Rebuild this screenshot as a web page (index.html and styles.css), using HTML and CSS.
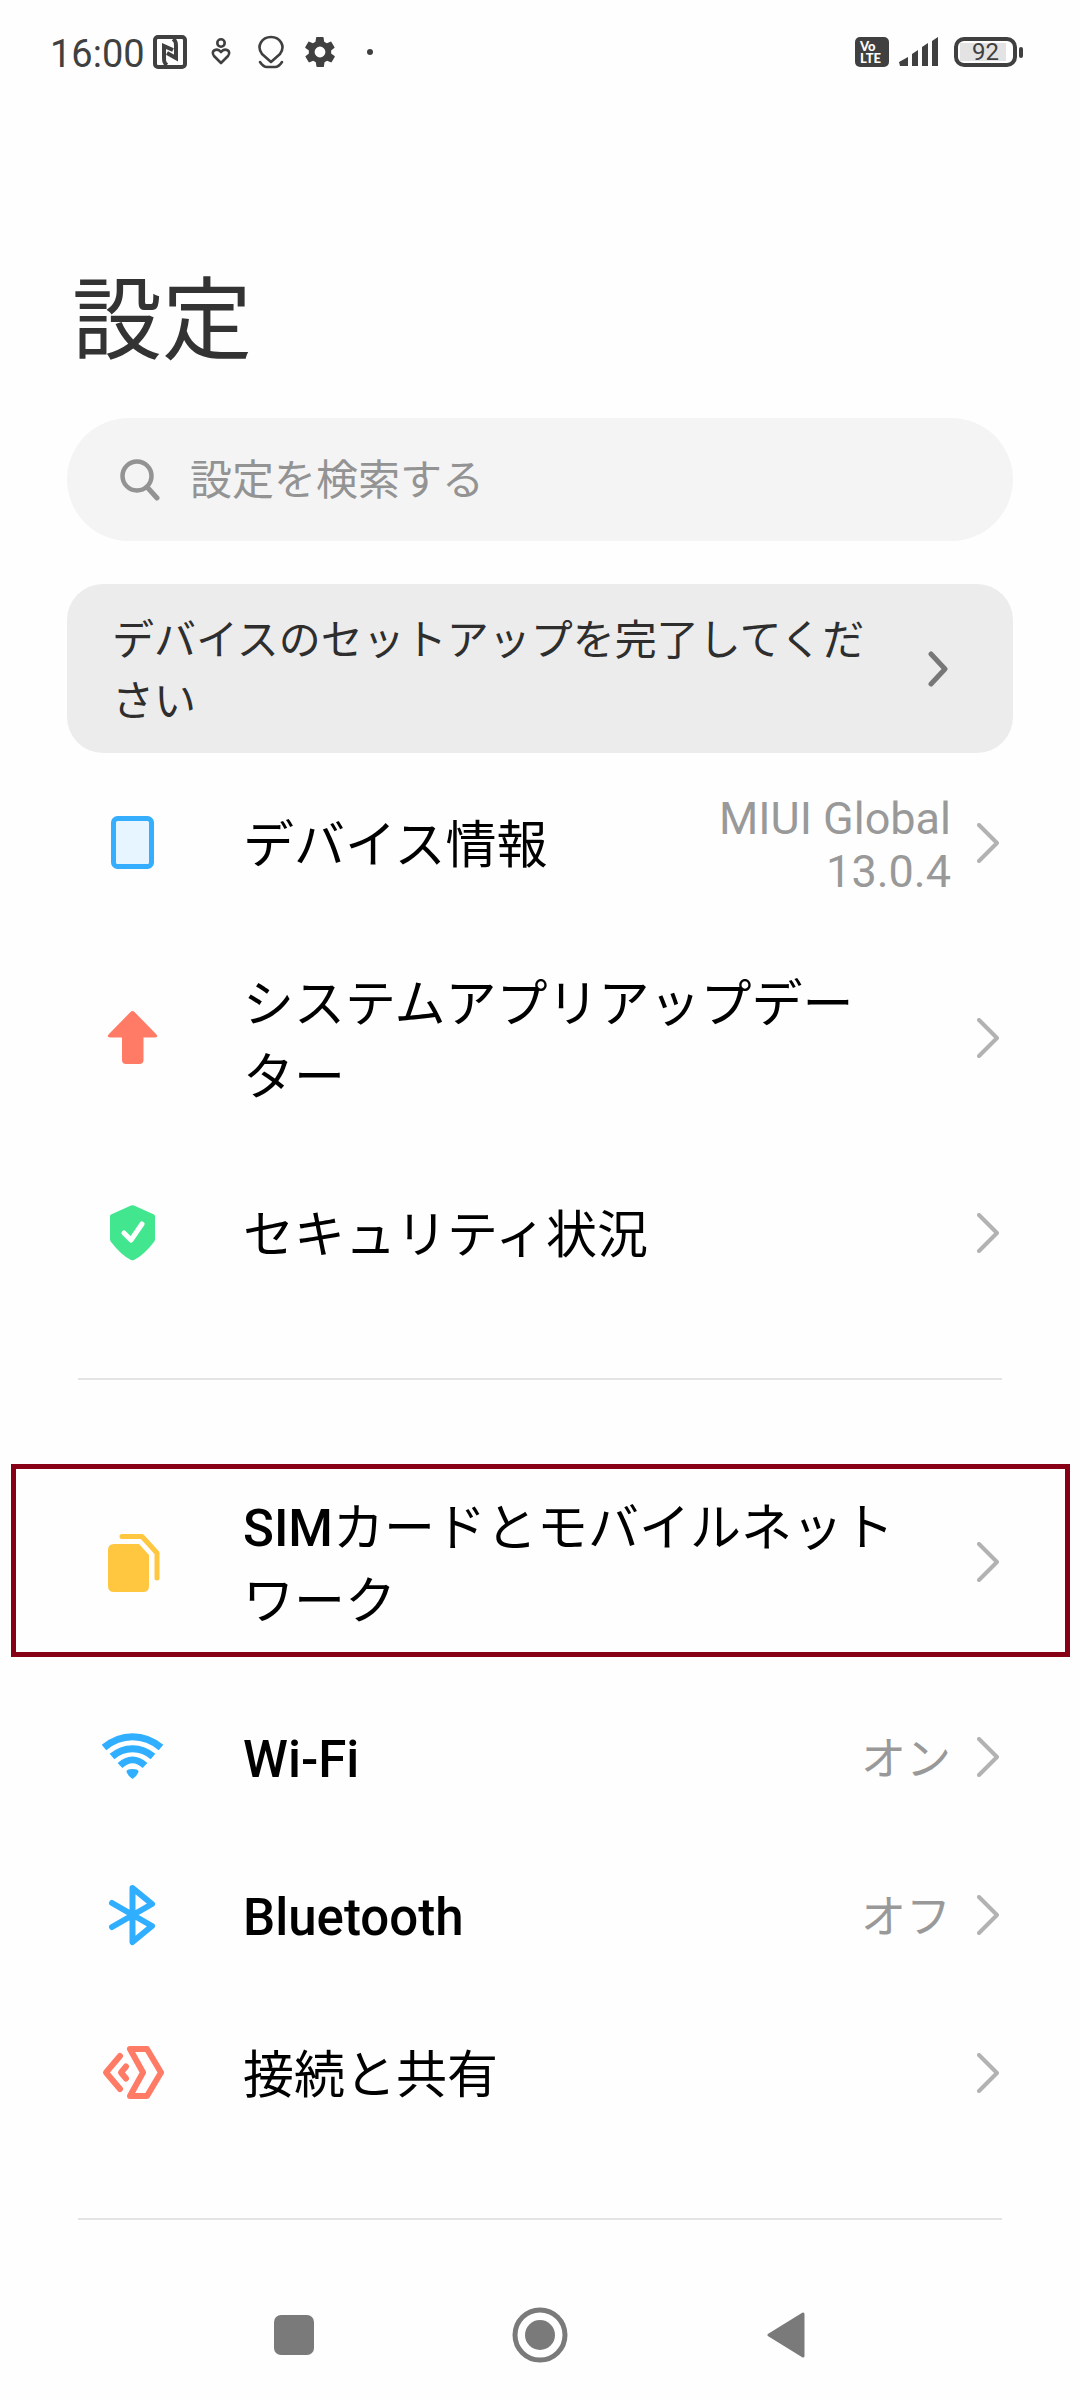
FILE: index.html
```html
<!DOCTYPE html>
<html lang="ja">

<head>
    <meta charset="UTF-8">
    <meta name="viewport" content="width=device-width, initial-scale=1.0">
    <title>設定</title>
    <link rel="stylesheet" href="styles.css">
</head>

<body>
    <!-- shared chevron -->
    <svg class="defs" width="0" height="0" aria-hidden="true">
        <symbol id="chevron" viewBox="0 0 22 40">
            <path d="M2 2 L20 20 L2 38" fill="none" stroke="currentColor" stroke-width="4" stroke-linecap="round" stroke-linejoin="round" />
        </symbol>
    </svg>

    <div id="status">
        <span class="time">16:00</span>
        <svg class="nfc" width="34" height="34" viewBox="0 0 34 34">
            <rect x="2" y="2" width="30" height="30" rx="3" fill="none" stroke="#404040" stroke-width="4" />
            <path d="M14 30 C11 28 11 26 11 22 V11 L20 15 M20 4 C23 6 23 8 23 12 V23 L14 18" fill="none" stroke="#404040" stroke-width="4" />
        </svg>
        <svg class="care" width="20" height="28" viewBox="0 0 20 28">
            <g fill="none" stroke="#404040" stroke-width="2.600" stroke-linejoin="round">
                <circle cx="10" cy="5" r="3.700" />
                <path d="M10 25 L3 18 C-1 13 6 9 10 14 C14 9 21 13 17 18 Z" />
            </g>
        </svg>
        <svg class="pin" width="26" height="34" viewBox="0 0 26 34">
            <g fill="none" stroke="#404040" stroke-width="2.600" stroke-linejoin="round" stroke-linecap="round">
                <path d="M13 27 L4 19 C-2 11 4 2 13 2 C22 2 28 11 22 19 Z" />
                <path d="M2 27 C4 30 6 32 9 32 H17 C20 32 22 30 24 27" />
            </g>
        </svg>
        <svg class="gear" width="30" height="30" viewBox="2 2 20 20">
            <path fill="#404040" d="M19.4 13a7.500 7.500 0 0 0 0-2l2.100-1.600c.2-.2.300-.4.100-.7l-2-3.400c-.1-.2-.4-.3-.6-.2l-2.500 1a7.300 7.300 0 0 0-1.700-1l-.4-2.600a.5.5 0 0 0-.5-.5h-4a.5.5 0 0 0-.5.4l-.4 2.700a7.700 7.700 0 0 0-1.700 1l-2.500-1c-.2-.1-.5 0-.6.2l-2 3.400c-.1.200-.1.500.1.700L4.600 11a7.500 7.500 0 0 0 0 2l-2.100 1.600c-.2.200-.3.400-.1.700l2 3.400c.1.200.4.300.6.200l2.500-1c.5.400 1.100.7 1.700 1l.4 2.600c0 .3.200.5.500.5h4c.3 0 .5-.2.500-.4l.4-2.700c.6-.2 1.200-.6 1.700-1l2.500 1c.2.100.5 0 .6-.2l2-3.400c.1-.2.100-.5-.1-.7zM12 15.600a3.600 3.600 0 1 1 0-7.200 3.600 3.600 0 0 1 0 7.200z" />
        </svg>
        <span class="dot"></span>
        <span class="volte"><span>Vo</span><span>LTE</span></span>
        <svg class="signal" width="40" height="30" viewBox="0 0 40 30">
            <path d="M0 25 L9 20 V29 H1 Z M13 17 L19 13 V29 H13 Z M23 10 L29 6 V29 H23 Z M33 4 L39 0 V29 H33 Z" fill="#404040" />
        </svg>
        <span class="battery"><span class="level">92</span></span>
        <span class="battery-tip"></span>
    </div>

    <h1>設定</h1>

    <form id="search" role="search">
        <svg width="40" height="42" viewBox="0 0 40 42">
            <g fill="none" stroke="#939393" stroke-width="4.500" stroke-linecap="round">
                <circle cx="17" cy="17" r="14.500" />
                <path d="M27 28 L37 39" stroke-width="5" />
            </g>
        </svg>
        <input type="search" name="q" placeholder="設定を検索する" aria-label="設定を検索する">
    </form>

    <a id="setup" href="#">
        <span>デバイスのセットアップを完了してください</span>
        <svg width="20" height="36" viewBox="0 0 20 36">
            <path d="M3 3 L17 18 L3 33" fill="none" stroke="#777" stroke-width="5" stroke-linecap="round" stroke-linejoin="round" />
        </svg>
    </a>

    <ul class="group">
        <li>
            <a class="row" href="#">
                <svg class="icon" viewBox="0 0 64 64">
                    <rect x="13.500" y="7.500" width="38" height="48" rx="4" fill="#e6f5ff" stroke="#36aeff" stroke-width="5" />
                </svg>
                <span class="label">デバイス情報</span>
                <span class="value">MIUI Global 13.0.4</span>
                <svg class="chevron"><use href="#chevron" /></svg>
            </a>
        </li>
        <li>
            <a class="row tall" href="#">
                <svg class="icon" viewBox="0 0 64 64">
                    <path d="M30.500 6 Q32.500 4 34.500 6 L56 28 Q59 31.500 55 31.500 H43.500 V54 Q43.500 58 39.500 58 H26 Q22 58 22 54 V31.500 H10 Q6 31.500 9 28 Z" fill="#ff7b66" />
                </svg>
                <span class="label">システムアプリアップデーター</span>
                <svg class="chevron"><use href="#chevron" /></svg>
            </a>
        </li>
        <li>
            <a class="row" href="#">
                <svg class="icon" viewBox="0 0 64 64">
                    <path d="M31 4.500 Q32.500 4 34 4.500 L54 13.500 Q55 14 55 15 V38 Q55 40 53.500 41.500 Q44 54 34 59 Q32.500 59.500 31 59 Q21 54 11.500 41.500 Q10 40 10 38 V15 Q10 14 11 13.500 Z" fill="#42e68f" />
                    <path d="M24 32 L31 39 L42 23" fill="none" stroke="#fff" stroke-width="5" stroke-linecap="round" stroke-linejoin="round" />
                </svg>
                <span class="label">セキュリティ状況</span>
                <svg class="chevron"><use href="#chevron" /></svg>
            </a>
        </li>
    </ul>
    <hr>
    <ul class="group">
        <li>
            <a class="row tall marked" href="#">
                <svg class="icon" viewBox="0 0 64 64">
                    <path d="M14 14 H39 L49 25 V56 Q49 62 43 62 H14 Q8 62 8 56 V20 Q8 14 14 14 Z" fill="#ffc640" />
                    <path d="M22 6.500 H42 L57 23 V48" fill="none" stroke="#ffc640" stroke-width="5" stroke-linecap="round" stroke-linejoin="round" />
                </svg>
                <span class="label"><b>SIM</b>カードとモバイルネットワーク</span>
                <svg class="chevron"><use href="#chevron" /></svg>
            </a>
        </li>
        <li>
            <a class="row" href="#">
                <svg class="icon" viewBox="0 0 64 64">
                    <g fill="none" stroke="#30aeff" stroke-width="7" stroke-linejoin="round">
                        <path d="M4 22.500 C21 8 44 8 61 22.500" />
                        <path d="M12 31.500 C24 21 41 21 53 31.500" />
                        <path d="M20 40.500 C28 33 37 33 45 40.500" />
                    </g>
                    <path d="M26.500 47 Q26 44 32.500 44 Q39 44 38.500 47 Q37 51 32.500 54 Q28 51 26.500 47 Z" fill="#30aeff" />
                </svg>
                <span class="label"><b>Wi-Fi</b></span>
                <span class="value">オン</span>
                <svg class="chevron"><use href="#chevron" /></svg>
            </a>
        </li>
        <li>
            <a class="row" href="#">
                <svg class="icon" viewBox="0 0 64 64">
                    <path d="M12 20 L52 43 L32.500 59 V5 L52 21 L12 44" fill="none" stroke="#30aeff" stroke-width="6" stroke-linecap="round" stroke-linejoin="round" />
                </svg>
                <span class="label"><b>Bluetooth</b></span>
                <span class="value">オフ</span>
                <svg class="chevron"><use href="#chevron" /></svg>
            </a>
        </li>
        <li>
            <a class="row" href="#">
                <svg class="icon" viewBox="0 0 64 64">
                    <g fill="none" stroke="#ff7b66" stroke-width="6" stroke-linecap="round" stroke-linejoin="round">
                        <path d="M30 8 H47 L61 31.500 L47 55 H30 L43 31.500 Z" />
                        <path d="M20 15 L6 31.500 L20 48" />
                        <path d="M26 25.500 L21 31.500 L26 37.500" />
                    </g>
                </svg>
                <span class="label">接続と共有</span>
                <svg class="chevron"><use href="#chevron" /></svg>
            </a>
        </li>
    </ul>
    <hr>

    <nav id="navbar">
        <button type="button" aria-label="履歴">
            <svg width="40" height="40" viewBox="0 0 40 40"><rect width="40" height="40" rx="7" fill="#7a7a7a" /></svg>
        </button>
        <button type="button" aria-label="ホーム">
            <svg width="56" height="56" viewBox="0 0 56 56">
                <circle cx="28" cy="28" r="25" fill="none" stroke="#7a7a7a" stroke-width="5" />
                <circle cx="28" cy="28" r="15" fill="#7a7a7a" />
            </svg>
        </button>
        <button type="button" aria-label="戻る">
            <svg width="38" height="46" viewBox="0 0 38 46">
                <path d="M2 23 L36 2 V44 Z" fill="#7a7a7a" stroke="#7a7a7a" stroke-width="3" stroke-linejoin="round" />
            </svg>
        </button>
    </nav>
</body>

</html>
```
FILE: styles.css
```css
* {
    box-sizing: border-box;
}

body {
    display: flex;
    flex-direction: column;
    min-height: 100vh;
    margin: 0;
    background: #fefefe;
    color: #000;
    font-family: Roboto, "Noto Sans CJK JP", sans-serif;
}

svg {
    display: block;
    flex-shrink: 0;
}

a {
    color: inherit;
    text-decoration: none;
}

.defs {
    position: absolute;
}

/* status bar */
#status {
    display: flex;
    align-items: center;
    height: 104px;
    padding: 0 57px 0 50px;
    color: #404040;
}

.time {
    padding-top: 4px;
    font-size: 38px;
    line-height: 44px;
}

.nfc {
    margin-left: 8px;
}

.care {
    margin-left: 24px;
}

.pin {
    margin-left: 27px;
}

.gear {
    margin-left: 21px;
}

.dot {
    width: 6px;
    height: 6px;
    margin-left: 32px;
    border-radius: 50%;
    background: #404040;
}

.volte {
    display: flex;
    flex-direction: column;
    width: 34px;
    height: 30px;
    margin-left: auto;
    padding: 3px 5px;
    border-radius: 5px;
    background: #404040;
    color: #fff;
    font-family: Lato, sans-serif;
    font-size: 13px;
    font-weight: 900;
    line-height: 12px;
}

.signal {
    margin-left: 10px;
}

.battery {
    width: 63px;
    height: 30px;
    margin-left: 15px;
    padding: 2px;
    border: 4px solid #404040;
    border-radius: 10px;
}

.level {
    display: block;
    width: 46px;
    padding-left: 5px;
    background: #e3e3e3;
    font-size: 24px;
    line-height: 18px;
    text-align: center;
}

.battery-tip {
    width: 4px;
    height: 11px;
    margin-left: 2px;
    border-radius: 2px;
    background: #404040;
}

h1 {
    margin: 154px 72px 0;
    color: #333;
    font-size: 90px;
    font-weight: 400;
    line-height: 128px;
}

#search {
    display: flex;
    align-items: center;
    gap: 30px;
    height: 123px;
    margin: 32px 67px 0;
    padding: 0 53px;
    border-radius: 62px;
    background: #f4f4f4;
}

#search input {
    flex: 1;
    min-width: 0;
    padding: 2px 0 0;
    border: 0;
    outline: none;
    background: none;
    font-family: inherit;
    font-size: 42px;
    line-height: 62px;
}

#search input::placeholder {
    color: #939393;
    opacity: 1;
}

#setup {
    display: flex;
    align-items: center;
    justify-content: space-between;
    gap: 24px;
    min-height: 169px;
    margin: 43px 67px 11px;
    padding: 0 65px 0 45px;
    border-radius: 36px;
    background: #ececec;
    color: #2e2e2e;
    font-size: 42px;
    line-height: 61px;
}

#setup span {
    padding-top: 4px;
}

/* settings list */
.group {
    margin: 0;
    padding: 0;
    list-style: none;
}

.row {
    display: flex;
    align-items: center;
    position: relative;
    min-height: 158px;
    padding: 0 81px 0 100px;
}

.row.tall {
    min-height: 232px;
}

.icon {
    width: 64px;
    height: 64px;
    margin-right: 79px;
}

.label {
    flex: 1;
    max-width: 660px;
    padding-top: 5px;
    font-size: 51px;
    line-height: 73px;
}

.label b {
    font-weight: 500;
}

.value {
    max-width: 260px;
    margin-left: auto;
    padding-top: 4px;
    color: #999;
    font-size: 45px;
    line-height: 53px;
    text-align: right;
}

.chevron {
    width: 22px;
    height: 40px;
    margin-left: 26px;
    color: #b2b2b2;
}

.label + .chevron {
    margin-left: auto;
}

/* red frame over the row */
.marked::after {
    content: "";
    position: absolute;
    inset: 18px 10px 21px 11px;
    border: 5px solid #870016;
}

hr {
    width: auto;
    height: 2px;
    margin: 66px 78px;
    border: 0;
    background: #e4e4e4;
}

hr:last-of-type {
    margin-bottom: 0;
}

/* system buttons */
#navbar {
    display: flex;
    align-items: center;
    justify-content: center;
    height: 130px;
    margin-top: auto;
}

#navbar button {
    display: flex;
    align-items: center;
    justify-content: center;
    width: 246px;
    height: 100%;
    padding: 0;
    border: 0;
    background: none;
}
```
